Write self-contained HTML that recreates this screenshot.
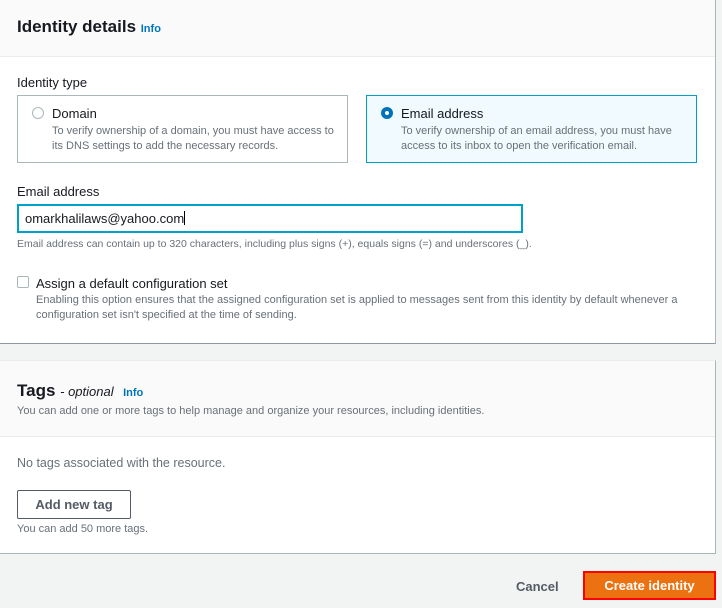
<!DOCTYPE html>
<html><head><meta charset="utf-8"><style>
*{margin:0;padding:0;box-sizing:border-box}
body{width:722px;height:608px;background:#f2f3f3;font-family:"Liberation Sans",sans-serif;color:#16191f;position:relative;overflow:hidden}
.a{position:absolute;white-space:nowrap}
.p{position:absolute;left:0;width:716px;background:#fff;border-right:1px solid #aab7b8}
.s{font-size:11px;color:#687078}
.info{color:#0073bb;font-weight:bold;font-size:11px}
</style></head><body>
<div class="p" style="top:0;height:344px;border-bottom:1px solid #8d99a0">
 <div style="position:absolute;left:0;top:0;width:715px;height:57px;background:#fafafa;border-bottom:1px solid #eaeded"></div>
 <div class="a" style="left:17px;top:17px;font-size:17px;font-weight:bold">Identity details <span class="info">Info</span></div>
 <div class="a" style="left:17px;top:75px;font-size:13px">Identity type</div>
 <div style="position:absolute;left:17px;top:95px;width:331px;height:68px;border:1px solid #aab7b8"></div>
 <div style="position:absolute;left:32px;top:107px;width:12px;height:12px;border:1px solid #aab7b8;border-radius:50%"></div>
 <div class="a" style="left:52px;top:106px;font-size:13px">Domain</div>
 <div class="a s" style="left:52px;top:124px;line-height:15px">To verify ownership of a domain, you must have access to<br>its DNS settings to add the necessary records.</div>
 <div style="position:absolute;left:366px;top:95px;width:331px;height:68px;border:1px solid #00a1c9;background:#f1faff"></div>
 <div style="position:absolute;left:381px;top:107px;width:12px;height:12px;border:4px solid #0073bb;border-radius:50%;background:#fff"></div>
 <div class="a" style="left:401px;top:106px;font-size:13px">Email address</div>
 <div class="a s" style="left:401px;top:124px;line-height:15px">To verify ownership of an email address, you must have<br>access to its inbox to open the verification email.</div>
 <div class="a" style="left:17px;top:184px;font-size:13px">Email address</div>
 <div style="position:absolute;left:17px;top:204px;width:506px;height:29px;border:2px solid #00a1c9;"></div>
 <div class="a" style="left:25px;top:211px;font-size:13px">omarkhalilaws@yahoo.com<span style="display:inline-block;width:1px;height:14px;background:#000;vertical-align:-2px"></span></div>
 <div class="a s" style="left:17px;top:238px;font-size:10.5px">Email address can contain up to 320 characters, including plus signs (+), equals signs (=) and underscores (_).</div>
 <div style="position:absolute;left:17px;top:276px;width:12px;height:12px;border:1px solid #aab7b8;border-radius:2px"></div>
 <div class="a" style="left:36px;top:276px;font-size:13px">Assign a default configuration set</div>
 <div class="a s" style="left:36px;top:293px;line-height:15px">Enabling this option ensures that the assigned configuration set is applied to messages sent from this identity by default whenever a<br>configuration set isn't specified at the time of sending.</div>
</div>
<div class="p" style="top:360px;height:194px;border-top:1px solid #eaeded;border-bottom:1px solid #aab7b8">
 <div style="position:absolute;left:0;top:0;width:715px;height:76px;background:#fafafa;border-bottom:1px solid #eaeded"></div>
 <div class="a" style="left:17px;top:20px;font-size:17px;font-weight:bold">Tags <span style="font-weight:normal;font-style:italic;font-size:13px">- optional</span> &nbsp;<span class="info">Info</span></div>
 <div class="a s" style="left:17px;top:44px">You can add one or more tags to help manage and organize your resources, including identities.</div>
 <div class="a" style="left:17px;top:95px;font-size:12.5px;color:#687078">No tags associated with the resource.</div>
 <div style="position:absolute;left:17px;top:129px;width:114px;height:29px;border:1px solid #545b64;border-radius:2px;font-size:13px;font-weight:bold;color:#545b64;text-align:center;line-height:27px">Add new tag</div>
 <div class="a s" style="left:17px;top:162px">You can add 50 more tags.</div>
</div>
<div class="a" style="left:516px;top:579px;font-size:13px;font-weight:bold;color:#545b64">Cancel</div>
<div style="position:absolute;left:583px;top:571px;width:133px;height:29px;background:#ec7211;border:2px solid #f00;color:#fff;font-size:13px;font-weight:bold;text-align:center;line-height:25px">Create identity</div>
</body></html>
